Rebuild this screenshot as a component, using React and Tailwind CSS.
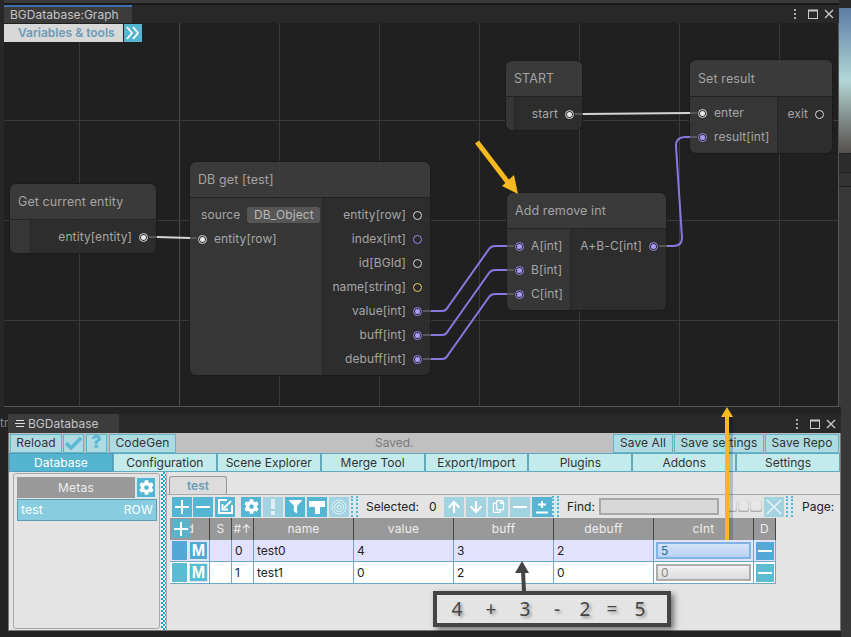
import React from 'react';
import { FaCog, FaFilter, FaArrowUp, FaArrowDown, FaRegCopy } from 'react-icons/fa';

const PORT_TONES = {
  white: { ring: 'border-[#d8d8d8]', dot: 'bg-[#e8e8e8]' },
  purple: { ring: 'border-[#9788ee]', dot: 'bg-[#a99cf5]' },
  yellow: { ring: 'border-[#efcf63]', dot: 'bg-[#efcf63]' },
};

function Port({ tone = 'white', on = false }) {
  const t = PORT_TONES[tone];
  return (
    <span className={`flex h-[9px] w-[9px] shrink-0 items-center justify-center rounded-full border bg-[#2a2a2a] ${t.ring}`}>
      {on && <span className={`h-[5px] w-[5px] rounded-full ${t.dot}`} />}
    </span>
  );
}

function InRow({ label, tone, on }) {
  return (
    <div className="flex h-[24px] items-center gap-[7px] pl-[8px] whitespace-nowrap">
      <Port tone={tone} on={on} />
      <span>{label}</span>
    </div>
  );
}

function OutRow({ label, tone, on }) {
  return (
    <div className="flex h-[24px] items-center justify-end gap-[7px] pr-[8px] whitespace-nowrap">
      <span>{label}</span>
      <Port tone={tone} on={on} />
    </div>
  );
}

function GraphNode({ className, title, inputs, inClass, outputs, headClass = 'h-[36px]' }) {
  return (
    <div className={`absolute flex flex-col overflow-hidden rounded-[7px] border border-[#1b1b1b] text-[12px] tracking-[0.1px] text-[#a6a6a6] ${className}`}>
      <div className={`flex shrink-0 items-center border-b border-[#222] bg-[#3c3c3c]/95 pt-[2px] pl-[7px] text-[12.5px] text-[#a3a3a3] ${headClass}`}>
        <span className="pl-[1px]">{title}</span>
      </div>
      <div className="flex min-h-0 flex-1">
        <div className={`shrink-0 border-r border-[#262626] bg-[#383838]/95 ${inClass}`}>{inputs}</div>
        <div className="flex-1 bg-[#2e2e2e]/95 pt-[5px]">{outputs}</div>
      </div>
    </div>
  );
}

function GraphBackdrop() {
  const xs = [79, 179, 279, 379, 479, 579, 679, 779];
  const ys = [120, 220, 320];
  return (
    <svg className="absolute inset-0 h-full w-full" viewBox="4 23 834 383">
      {xs.map((x) => (
        <line key={x} x1={x + 0.5} x2={x + 0.5} y1="23" y2="406" stroke={x === 179 ? '#4b4b4b' : '#3a3a3a'} />
      ))}
      {ys.map((y) => (
        <line key={y} x1="4" x2="838" y1={y + 0.5} y2={y + 0.5} stroke="#3a3a3a" />
      ))}
    </svg>
  );
}

function Wires() {
  const purple = '#8878e0';
  const stubs = [
    [149, 237, 157], [190, 238, 197], [575, 114, 583], [690, 113, 697], [690, 137, 697],
    [423, 311, 431], [423, 335, 431], [423, 359, 431], [507, 246, 514], [507, 270, 514], [507, 294, 514], [659, 246, 667],
  ];
  return (
    <svg className="pointer-events-none absolute inset-0 h-full w-full" viewBox="4 23 834 383" fill="none">
      {stubs.map(([a, y, b]) => (
        <line key={`${a}-${y}`} x1={a} x2={b} y1={y} y2={y} stroke="#575757" strokeWidth="2" />
      ))}
      <path d="M157 237 L190 238" stroke="#d5d5d5" strokeWidth="2" />
      <path d="M583 114 L690 113" stroke="#d5d5d5" strokeWidth="2" />
      <path d="M431 311 H442 Q446 311 448 307 L489 249 Q491 246 495 246 H507" stroke={purple} strokeWidth="2" />
      <path d="M431 335 H442 Q446 335 448 331 L489 273 Q491 270 495 270 H507" stroke={purple} strokeWidth="2" />
      <path d="M431 359 H442 Q446 359 448 355 L489 297 Q491 294 495 294 H507" stroke={purple} strokeWidth="2" />
      <path d="M667 246 H673 Q682 246 682 238 L676 146 Q676 137 685 137 H690" stroke={purple} strokeWidth="2" />
    </svg>
  );
}

function WindowButtons() {
  return (
    <svg width="44" height="12" viewBox="0 0 44 12" className="shrink-0" fill="none" stroke="#c8c8c8">
      <circle cx="4" cy="2" r="1.1" fill="#c8c8c8" stroke="none" />
      <circle cx="4" cy="6" r="1.1" fill="#c8c8c8" stroke="none" />
      <circle cx="4" cy="10" r="1.1" fill="#c8c8c8" stroke="none" />
      <rect x="17.5" y="2.5" width="9" height="8" />
      <line x1="17" y1="2.5" x2="27" y2="2.5" strokeWidth="2" />
      <path d="M34 2 L42 10 M42 2 L34 10" strokeWidth="1.4" />
    </svg>
  );
}

function TopButton({ className, children }) {
  return (
    <div className={`flex h-[19px] items-center justify-center border border-[#63b6c9] bg-[#aedbe2] text-[12px] tracking-[0.1px] text-[#333] ${className}`}>
      {children}
    </div>
  );
}

function ModeTab({ label, active }) {
  return (
    <div className={active
      ? 'flex flex-1 items-center justify-center border border-[#4f9db8] bg-[#55b4d0] text-[12px] text-white'
      : 'flex flex-1 items-center justify-center border border-[#62a9bd] bg-[#c3ebeb] text-[12px] text-[#333]'}>
      {label}
    </div>
  );
}

function IconButton({ dim, children, className = '' }) {
  return (
    <div className={`flex h-[20px] w-[20px] shrink-0 items-center justify-center text-white ${dim ? 'bg-[#a2d3e0]' : 'bg-[#55b6d3]'} ${className}`}>
      {children}
    </div>
  );
}

const Plus = () => (
  <svg width="16" height="16" viewBox="0 0 16 16" stroke="#fff" strokeWidth="2"><path d="M8 1V15M1 8H15" /></svg>
);
const Minus = () => (
  <svg width="16" height="16" viewBox="0 0 16 16" stroke="#fff" strokeWidth="2"><path d="M1 8H15" /></svg>
);

function Handle() {
  return <div className="h-[21px] w-[7px] shrink-0 border-x-2 border-dotted border-[#55b6d3] bg-[#d7e8ee]" />;
}

function ToolIcons() {
  return (
    <>
      <div className="flex gap-[1px]">
        <IconButton><Plus /></IconButton>
        <IconButton><Minus /></IconButton>
      </div>
      <IconButton className="ml-[2px]">
        <svg width="17" height="17" viewBox="0 0 17 17" fill="none" stroke="#fff" strokeWidth="2">
          <path d="M10 2H2V15H15V7" />
          <path d="M14 3L7 10" />
          <path d="M5.5 6V11.5H11" />
        </svg>
      </IconButton>
      <div className="ml-[6px] flex gap-[2px]">
        <IconButton><FaCog size={15} /></IconButton>
        <IconButton dim>
          <svg width="6" height="16" viewBox="0 0 6 16" fill="#dfeef2"><path d="M1 0H5V10H1ZM1 12H5V16H1Z" /></svg>
        </IconButton>
        <IconButton><FaFilter size={13} /></IconButton>
        <IconButton>
          <svg width="16" height="14" viewBox="0 0 16 14" fill="#fff"><path d="M0 1H16V7H11V14H6V7H0Z" /></svg>
        </IconButton>
        <IconButton dim>
          <svg width="16" height="16" viewBox="0 0 16 16" fill="none" stroke="#e6f3f6">
            <circle cx="8" cy="8" r="7" />
            <circle cx="8" cy="8" r="4.5" />
            <circle cx="8" cy="8" r="2" />
          </svg>
        </IconButton>
      </div>
      <div className="ml-[2px]"><Handle /></div>
      <span className="ml-[8px] w-[53px] text-[12px] whitespace-nowrap text-[#222]">Selected:</span>
      <span className="ml-[10px] w-[15px] text-[12px] text-[#222]">0</span>
      <div className="flex gap-[2px]">
        <IconButton dim><FaArrowUp size={14} /></IconButton>
        <IconButton dim><FaArrowDown size={14} /></IconButton>
        <IconButton dim><FaRegCopy size={13} /></IconButton>
        <IconButton dim><Minus /></IconButton>
        <IconButton>
          <svg width="14" height="14" viewBox="0 0 14 14" stroke="#fff" strokeWidth="2"><path d="M7 1V8M3 4.5H11M1 12.5H13" /></svg>
        </IconButton>
      </div>
      <Handle />
      <span className="ml-[8px] w-[28px] text-[12px] text-[#222]">Find:</span>
      <div className="ml-[4px] h-[17px] w-[120px] border-2 border-[#a8a8a8] bg-[#d8d8d8]" />
      <div className="ml-[7px] flex gap-[1px]">
        <div className="h-[11px] w-[11px] rounded-[2px] bg-[#e8e8e8] shadow-[inset_0_-1px_2px_#999]" />
        <div className="h-[11px] w-[11px] rounded-[2px] bg-[#e8e8e8] shadow-[inset_0_-1px_2px_#999]" />
        <div className="h-[11px] w-[12px] rounded-[2px] bg-[#e8e8e8] shadow-[inset_0_-1px_2px_#999]" />
      </div>
      <IconButton dim className="ml-[2px]">
        <svg width="16" height="16" viewBox="0 0 16 16" stroke="#e6f3f6" strokeWidth="1.6"><path d="M1 1L15 15M15 1L1 15" /></svg>
      </IconButton>
      <div className="ml-[2px]"><Handle /></div>
      <span className="ml-[9px] text-[12px] text-[#222]">Page:</span>
    </>
  );
}

const headCell = 'flex items-center justify-center border-r border-[#444] bg-[#999] text-[12px] tracking-[0.2px] text-[#eee]';
const bodyCell = 'flex items-center border-r border-b border-[#6aa9c8] pl-[3px] text-[12px] text-[#222]';

function DataRow({ num, name, vals, selected }) {
  const rowBg = selected ? 'bg-[#e2e2fe]' : 'bg-white';
  const block = selected ? 'bg-[#53a8d8]' : 'bg-[#5bbcd4]';
  return (
    <>
      <div className={`flex items-center gap-[2px] border-r border-b border-[#6aa9c8] pl-[2px] ${rowBg}`}>
        <div className={`h-[19px] w-[15px] ${block}`} />
        <div className={`flex h-[19px] w-[19px] items-center justify-center border border-[#d8e8f0] font-['Liberation_Sans',sans-serif] text-[16px] font-bold text-white ${block}`}>M</div>
      </div>
      <div className={`border-r border-b border-[#6aa9c8] ${rowBg}`} />
      <div className={`${bodyCell} ${rowBg}`}>{num}</div>
      <div className={`${bodyCell} ${rowBg}`}>{name}</div>
      {vals.map((v, i) => (
        <div key={i} className={`${bodyCell} ${rowBg}`}>{v}</div>
      ))}
      <div className={`flex items-center border-r border-b border-[#6aa9c8] pl-[2px] ${rowBg}`}>
        <div className={selected
          ? 'flex h-[17px] w-[95px] items-center border-2 border-[#7fb3e4] bg-linear-to-b from-[#d3e3f9] to-[#b9d1f1] pl-[3px] text-[12px] text-[#2a6aa0]'
          : 'flex h-[17px] w-[95px] items-center border-2 border-[#acacac] bg-linear-to-b from-[#f2f2f2] to-[#dcdcdc] pl-[3px] text-[12px] text-[#888]'}>
          {num === '0' ? '5' : '0'}
        </div>
      </div>
      <div className={`flex items-center justify-center border-r border-b border-[#6aa9c8] ${rowBg}`}>
        <div className={`flex h-[18px] w-[18px] items-center justify-center ${block}`}><Minus /></div>
      </div>
    </>
  );
}

function Annotations() {
  return (
    <svg className="pointer-events-none absolute inset-0 h-full w-full" viewBox="0 0 851 637" fill="none">
      <path d="M477 142 L510 185" stroke="#f5b81f" strokeWidth="5" />
      <path d="M518 194 L502 186 L514 175 Z" fill="#f5b81f" />
      <line x1="731" x2="731" y1="416" y2="540" stroke="#000" strokeOpacity="0.18" strokeWidth="4" />
      <path d="M727 540 V416" stroke="#f5b81f" strokeWidth="4" />
      <path d="M727 407 L733 417 H721 Z" fill="#f5b81f" />
      <path d="M524 592 L523 570" stroke="#444" strokeWidth="4" />
      <path d="M522 561 L529 573 H515 Z" fill="#444" />
    </svg>
  );
}

export default function App() {
  return (
    <div className="relative h-[637px] w-[851px] overflow-hidden bg-[#383838] font-['Inter','Liberation_Sans',sans-serif]">
      <div className="flex h-[407px]">
        <div className="w-[4px] shrink-0 bg-[#282828]" />
        <div className="flex w-[835px] shrink-0 flex-col">
          <div className="h-[5px] shrink-0 border-b-2 border-[#191919] bg-[#3a3a3a]" />
          <div className="flex h-[18px] shrink-0 items-center bg-[#282828]">
            <div className="flex h-full w-[128px] items-center border-t-2 border-[#3a72b0] bg-[#3c3c3c] pl-[6px] text-[12px] text-[#c4c4c4]">
              BGDatabase:Graph
            </div>
            <div className="ml-auto pr-[4px]"><WindowButtons /></div>
          </div>
          <div className="relative min-h-0 flex-1 border-r border-b border-[#555] bg-[#202020]">
            <GraphBackdrop />
            <GraphNode
              className="top-[160px] left-[5px] h-[71px] w-[148px]"
              title="Get current entity"
              inClass="w-[21px]"
              outputs={<OutRow label="entity[entity]" on />}
            />
            <GraphNode
              className="top-[138px] left-[185px] h-[215px] w-[242px]"
              title="DB get [test]"
              inClass="w-[133px] pt-[5px]"
              inputs={
                <>
                  <div className="flex h-[24px] items-center gap-[7px] pl-[11px]">
                    <span>source</span>
                    <span className="flex h-[16px] w-[73px] items-center justify-center rounded-[3px] bg-[#565656] text-[#b8b8b8]">DB_Object</span>
                  </div>
                  <InRow label="entity[row]" on />
                </>
              }
              outputs={
                <>
                  <OutRow label="entity[row]" />
                  <OutRow label="index[int]" tone="purple" />
                  <OutRow label="id[BGId]" />
                  <OutRow label="name[string]" tone="yellow" />
                  <OutRow label="value[int]" tone="purple" on />
                  <OutRow label="buff[int]" tone="purple" on />
                  <OutRow label="debuff[int]" tone="purple" on />
                </>
              }
            />
            <GraphNode
              className="top-[37px] left-[501px] h-[71px] w-[78px]"
              title="START"
              inClass="w-[9px]"
              outputs={<OutRow label="start" on />}
            />
            <GraphNode
              className="top-[36px] left-[685px] h-[95px] w-[144px]"
              title="Set result"
              headClass="h-[37px]"
              inClass="w-[88px] pt-[4px]"
              inputs={
                <>
                  <InRow label="enter" on />
                  <InRow label="result[int]" tone="purple" on />
                </>
              }
              outputs={<OutRow label="exit" />}
            />
            <GraphNode
              className="top-[169px] left-[502px] h-[119px] w-[161px]"
              title="Add remove int"
              inClass="w-[64px] pt-[5px]"
              inputs={
                <>
                  <InRow label="A[int]" tone="purple" on />
                  <InRow label="B[int]" tone="purple" on />
                  <InRow label="C[int]" tone="purple" on />
                </>
              }
              outputs={<OutRow label="A+B-C[int]" tone="purple" on />}
            />
            <Wires />
            <div className="relative mt-px flex h-[18px] w-[138px]">
              <div className="flex w-[119px] items-center bg-[#d8d8d8] pl-[14px] text-[12px] font-semibold text-[#6c9cb6]">Variables &amp; tools</div>
              <div className="ml-px flex w-[18px] items-center justify-center bg-[#55b4d0]">
                <svg width="14" height="14" viewBox="0 0 14 14" fill="none" stroke="#fff" strokeWidth="1.8">
                  <path d="M1 1L6 7L1 13M7 1L12 7L7 13" />
                </svg>
              </div>
            </div>
          </div>
        </div>
        <div className="flex flex-1 flex-col">
          <div className="h-[8px] bg-[#282828]" />
          <div className="h-[145px] bg-linear-to-b from-[#5d7da6] via-[#b4d8d6] via-50% to-[#55504d]" />
          <div className="h-[20px] border-y border-[#1f1f1f] bg-[#2c2c2c]" />
          <div className="h-[14px] border-b border-[#1f1f1f] bg-[#333]" />
        </div>
      </div>

      <div className="flex h-[230px]">
        <div className="w-[8px] shrink-0 overflow-hidden bg-[#232323] pt-[7px] text-[12px] text-[#888]">tr</div>
        <div className="flex w-[833px] shrink-0 flex-col bg-[#232323] pt-[7px] pb-[6px]">
          <div className="flex h-[19px] shrink-0 items-center bg-[#282828]">
            <div className="flex h-full w-[111px] items-center gap-[3px] bg-[#3c3c3c] pl-[7px] text-[12px] text-[#c4c4c4]">
              <svg width="10" height="9" viewBox="0 0 10 9" stroke="#e0e0e0"><path d="M1 1.5H9M0 4.5H10M1 7.5H9" /></svg>
              <span>BGDatabase</span>
            </div>
            <div className="ml-auto pr-[4px]"><WindowButtons /></div>
          </div>
          <div className="flex min-h-0 flex-1 flex-col border-x border-b border-[#777] bg-[#e4e4e4]">
            <div className="relative flex h-[20px] shrink-0 items-center gap-px bg-[#c0c0c0] pl-px">
              <TopButton className="w-[52px]">Reload</TopButton>
              <TopButton className="w-[21px]">
                <svg width="17" height="14" viewBox="0 0 17 14" fill="none" stroke="#5cb8d4" strokeWidth="3.5"><path d="M1 7L6 12L16 2" /></svg>
              </TopButton>
              <TopButton className="ml-px w-[21px]">
                <span className="text-[17px] font-black text-[#5cb8d4]">?</span>
              </TopButton>
              <TopButton className="ml-px w-[67px]">CodeGen</TopButton>
              <span className="ml-[198px] text-[12px] text-[#7c7c7c]">Saved.</span>
              <div className="ml-auto flex gap-px pr-px">
                <TopButton className="w-[60px]">Save All</TopButton>
                <TopButton className="w-[90px]">Save settings</TopButton>
                <TopButton className="w-[74px]">Save Repo</TopButton>
              </div>
            </div>
            <div className="flex h-[19px] shrink-0">
              <ModeTab label="Database" active />
              <ModeTab label="Configuration" />
              <ModeTab label="Scene Explorer" />
              <ModeTab label="Merge Tool" />
              <ModeTab label="Export/Import" />
              <ModeTab label="Plugins" />
              <ModeTab label="Addons" />
              <ModeTab label="Settings" />
            </div>
            <div className="flex min-h-0 flex-1">
              <div className="mt-px mb-px ml-[4px] w-[147px] shrink-0 rounded-[3px] border border-[#a8a8a8] p-[3px]">
                <div className="flex h-[21px] gap-px">
                  <div className="flex w-[118px] items-center justify-center bg-[#999] text-[12px] tracking-[0.2px] text-[#eee]">Metas</div>
                  <IconButton className="h-[21px] w-[20px] border border-[#d0e8ee]"><FaCog size={15} /></IconButton>
                </div>
                <div className="mt-px flex h-[22px] w-[140px] items-center justify-between border border-[#5a9db0] bg-[#88cddf] px-[3px] text-[12px] tracking-[0.2px] text-white">
                  <span>test</span>
                  <span>ROW</span>
                </div>
              </div>
              <div className="ml-px w-[5px] shrink-0 bg-[repeating-conic-gradient(#1f9fcb_0_25%,#fff_0_50%)] bg-size-[4px_4px]" />
              <div className="min-w-0 flex-1 rounded-tl-[3px] border-l border-[#aaa] pt-[4px]">
                <div className="ml-[2px] flex h-[18px] w-[58px] items-center justify-center rounded-t-[3px] border border-b-0 border-[#999] bg-[#dcdcdc] text-[12px] font-semibold text-[#6c9cb6]">test</div>
                <div className="flex h-[24px] items-center border-t border-[#aaa] pl-[5px]">
                  <ToolIcons />
                </div>
                <div className="relative ml-[3px] grid w-[606px] auto-rows-[22px] grid-cols-[40px_22px_22px_100px_100px_100px_100px_100px_22px]">
                  <div className={`${headCell} justify-end pr-[15px]`}>d</div>
                  <div className={headCell}>S</div>
                  <div className={`${headCell} bg-[#77b4c6]`}>#↑</div>
                  <div className={headCell}>name</div>
                  <div className={headCell}>value</div>
                  <div className={headCell}>buff</div>
                  <div className={headCell}>debuff</div>
                  <div className={headCell}>cInt</div>
                  <div className={headCell}>D</div>
                  <DataRow num="0" name="test0" vals={['4', '3', '2']} selected />
                  <DataRow num="1" name="test1" vals={['0', '2', '0']} />
                  <div className="absolute top-px left-[2px] flex h-[19px] w-[18px] items-center justify-center bg-[#55b4d0]/90"><Plus /></div>
                </div>
              </div>
            </div>
          </div>
        </div>
      </div>

      <Annotations />
      <div className="absolute top-[591px] left-[433px] flex h-[36px] w-[238px] items-center border-4 border-[#444] pl-[3px] font-['Noto_Sans',sans-serif] text-[19px] text-[#444] shadow-[3px_3px_6px_rgba(0,0,0,0.5)] [text-shadow:2px_2px_3px_rgba(0,0,0,0.35)]">
        <span className="w-[34px] text-center">4</span>
        <span className="w-[34px] text-center">+</span>
        <span className="w-[34px] text-center">3</span>
        <span className="w-[30px] text-center">-</span>
        <span className="w-[26px] text-center">2</span>
        <span className="w-[28px] text-center">=</span>
        <span className="w-[28px] text-center">5</span>
      </div>
    </div>
  );
}
